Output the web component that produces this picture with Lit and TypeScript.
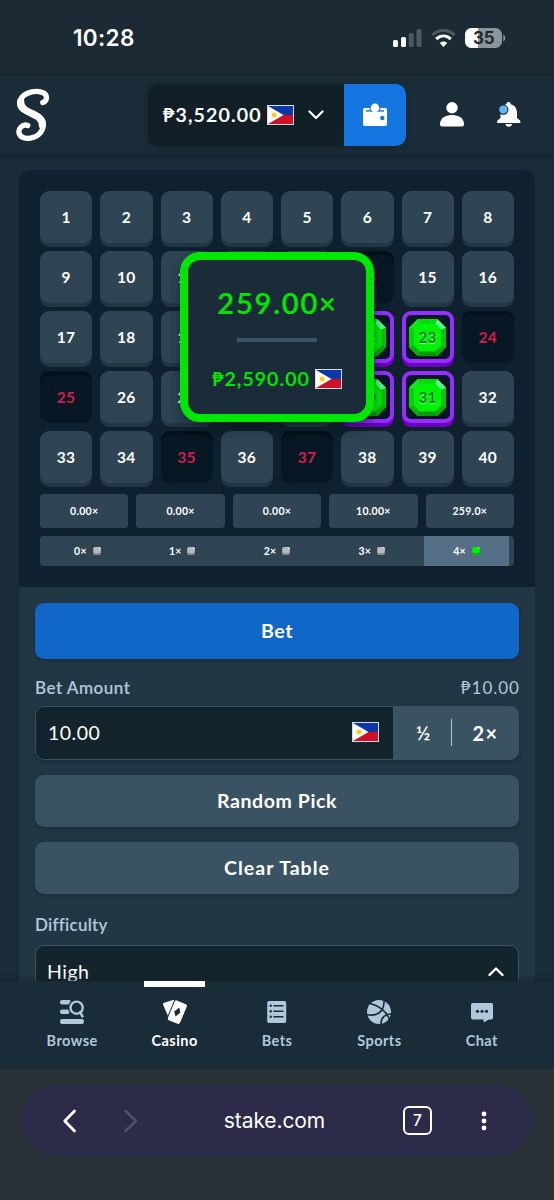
import { LitElement, html, svg, css } from "lit";
import { customElement, property } from "lit/decorators.js";
import { classMap } from "lit/directives/class-map.js";

const PICKED = new Set([22, 23, 30, 31]);
const MISSED = new Set([14, 24, 25, 28, 35, 37]);
const PAYOUTS = ["0.00×", "0.00×", "0.00×", "10.00×", "259.0×"];

@customElement("ph-flag")
export class PhFlag extends LitElement {
  static styles = css`
    :host { display: block; width: 27px; height: 20px; flex: none; }
    svg { display: block; }
  `;
  render() {
    return html`<svg width="27" height="20" viewBox="0 0 27 20">
      <rect width="27" height="20" fill="#d3dce8" />
      <rect x="1" y="1" width="25" height="9" fill="#0a38a8" />
      <rect x="1" y="10" width="25" height="9" fill="#ce1126" />
      <path d="M1 1L16.5 10L1 19Z" fill="#fff" />
      <circle cx="7" cy="10" r="2.3" fill="#fcc916" />
      <path d="M7 6.6V13.4M3.6 10H10.4M4.6 7.6L9.4 12.4M9.4 7.6L4.6 12.4" stroke="#fcd116" stroke-width=".6" />
      <circle cx="2.4" cy="3.3" r=".5" fill="#fcd116" /><circle cx="2.4" cy="16.7" r=".5" fill="#fcd116" />
    </svg>`;
  }
}

@customElement("keno-tile")
export class KenoTile extends LitElement {
  @property({ type: Number }) value = 0;

  static styles = css`
    :host { display: block; height: 52px; }
    .tile {
      box-sizing: border-box; height: 52px; border-radius: 9px; background: #2f4553;
      box-shadow: 0 4px 0 #213743; display: grid; place-items: center; color: #fff;
      font: 700 15.5px/20px "Lato", sans-serif; letter-spacing: .5px;
    }
    .missed { background: #071824; color: #d41e4a; box-shadow: inset 0 4px 0 #04111a; }
    .picked { background: #071824; border: 4px solid #962eff; box-shadow: 0 4px 0 #6c00c4; color: #0b7d12; }
    .gem, .num { grid-area: 1 / 1; }
    .num { margin-top: -1px; }
    .gem { display: block; }
    .picked .num { text-shadow: 0 1px 1px #8dffa0; z-index: 1; font-size: 15px; margin-top: 0; }
  `;
  render() {
    const picked = PICKED.has(this.value);
    return html`<div class=${classMap({ tile: true, picked, missed: MISSED.has(this.value) })}>
      ${picked
        ? html`<svg class="gem" width="37" height="37" viewBox="0 0 38 38">
            <path d="M9 0H29L38 9V29L29 38H9L0 29V9Z" fill="#05c808" />
            <path d="M9 0H29L27 5H11Z" fill="#04de08" />
            <path d="M0 9L9 0L11 5L5 11Z" fill="#12e51c" />
            <path d="M0 9L5 11V27L0 29Z" fill="#06cf0b" />
            <path d="M0 29L5 27L11 33L9 38Z" fill="#06b10b" />
            <path d="M9 38L11 33H27L29 38Z" fill="#05980a" />
            <path d="M29 38L27 33L33 27L38 29Z" fill="#04ad09" />
            <path d="M38 29L33 27V11L38 9Z" fill="#05c40a" />
            <path d="M29 0L38 9L33 11L27 5Z" fill="#55fb8c" />
            <path d="M11 5H27L33 11V27L27 33H11L5 27V11Z" fill="#00f205" />
          </svg>`
        : null}
      <span class="num">${this.value}</span>
    </div>`;
  }
}

const miniGem = (on: boolean) => svg`<svg width="8" height="8" viewBox="0 0 8 8">
  <rect width="8" height="8" rx="2" fill=${on ? "#05b80a" : "#8b8b8b"} />
  <rect x=".5" width="7" height="6" rx="1.6" fill=${on ? "#00ee08" : "#b9b9b9"} />
  <path d="M5.5 0H6.5L8 1.5V2.5Z" fill=${on ? "#7bffa5" : "#fff"} />
</svg>`;

const ICONS: Record<string, unknown> = {
  Browse: svg`<svg width="24" height="24" viewBox="0 0 24 24" fill="currentColor">
    <rect y="0" width="11" height="4.6" rx="2" /><rect y="9.4" width="9.5" height="4.6" rx="2" />
    <rect y="19" width="24" height="5" rx="2.2" />
    <circle cx="16.6" cy="7.7" r="8.6" fill="#1a2c38" />
    <circle cx="16.6" cy="7.7" r="6.1" fill="none" stroke="currentColor" stroke-width="2.4" />
    <path d="M20.2 12.2L22.4 16.4" stroke="currentColor" stroke-width="2.6" stroke-linecap="round" fill="none" /></svg>`,
  Casino: svg`<svg width="24" height="24" viewBox="0 0 24 24" fill="currentColor">
    <path d="M1.2 2.8L10 .1C10.6 0 11 .1 11.2 .3L4.8 15.6L.1 4.8C-.2 3.9 .3 3.1 1.2 2.8Z" />
    <path d="M13.8.4L22.8 4.2Q24.4 5 23.8 6.6L17 22.8Q16.2 24.3 14.6 23.8L5.8 20.2Q4.3 19.4 4.9 17.9L11.7 1.6Q12.4 0 13.8.4Z" />
    <path d="M16.2 7.6L17.4 12.4L12.5 16.5L11.2 11.6Z" fill="#1a2c38" /></svg>`,
  Bets: svg`<svg width="24" height="24" viewBox="0 0 24 24">
    <rect x="2.2" y="1" width="19" height="22" rx="1.8" fill="currentColor" />
    <g stroke="#1a2c38" stroke-width="1.6"><path d="M8.4 5.7H18.5M8.4 11.2H18.5M8.4 16.7H18.5" /></g>
    <g fill="#1a2c38"><circle cx="5.7" cy="5.7" r="1.2" /><circle cx="5.7" cy="11.2" r="1.2" /><circle cx="5.7" cy="16.7" r="1.2" /></g></svg>`,
  Sports: svg`<svg width="24" height="24" viewBox="0 0 24 24">
    <circle cx="12" cy="12" r="12" fill="currentColor" />
    <g fill="none" stroke="#1a2c38" stroke-width="1.6">
      <path d="M3 3.5C11 5 19.5 11 22.5 19.5M-.5 14.5C8 16.5 18 13.5 17 -.5M14 25C13.5 18 18 13.5 25 14" /></g></svg>`,
  Chat: svg`<svg width="24" height="24" viewBox="0 0 24 24">
    <path d="M2.6 3H21.4Q23 3 23 4.6V17.8Q23 19.4 21.4 19.4H19L13.6 22.6V19.4H2.6Q1 19.4 1 17.8V4.6Q1 3 2.6 3Z" fill="currentColor" />
    <g fill="#1a2c38"><circle cx="7.5" cy="11.3" r="1.6" /><circle cx="12" cy="11.3" r="1.6" /><circle cx="16.5" cy="11.3" r="1.6" /></g></svg>`,
};

@customElement("app-root")
export class AppRoot extends LitElement {
  static styles = css`
    :host {
      display: flex; flex-direction: column; width: 554px; height: 1200px; overflow: hidden;
      background: #1a2c38; color: #fff; font-family: "Lato", "Noto Sans", sans-serif;
    }
    * { box-sizing: border-box; }
    svg { display: block; flex: none; }
    .status {
      flex: none; height: 76px; background: #1b2a35; display: flex; align-items: center;
      padding: 0 48px 0 73px; font: 600 22.5px/30px "Inter", sans-serif;
    }
    .time { flex: 1; letter-spacing: .35px; }
    .signals { display: flex; align-items: center; gap: 9px; }
    .topbar {
      flex: none; height: 77px; display: flex; align-items: center; padding: 0 31px 0 14px;
      box-shadow: 0 3px 6px #0f1c2580; position: relative;
    }
    .logo { width: 134px; }
    .balance { display: flex; width: 258px; height: 62px; border-radius: 10px; overflow: hidden; box-shadow: 0 2px 4px #0f1c2580; }
    .funds {
      width: 196px; background: #111f26; padding-left: 15px; display: flex; align-items: center;
      font-size: 19.5px; font-weight: 600; -webkit-text-stroke: .2px currentColor;
    }
    .funds span { width: 103.5px; letter-spacing: 1.15px; white-space: nowrap; }
    .funds .caret { margin-left: 14px; }
    .wallet { width: 62px; background: #1475e1; display: grid; place-items: center; }
    .user { margin-left: 34px; }
    .bell { margin-left: 32px; }
    .page { flex: 1; min-height: 0; overflow: hidden; padding: 17px 19px 0; background: #1a2c38; }
    .card { border-radius: 12px 12px 0 0; background: #213743; overflow: hidden; }
    .board { position: relative; height: 416.5px; background: #0f212e; padding: 21px 21px 0; }
    .tiles { display: grid; grid-template-columns: repeat(8, 1fr); gap: 8px; }
    .payouts { display: grid; grid-template-columns: repeat(5, 1fr); gap: 8px; margin-top: 11px; }
    .payouts div {
      height: 34px; border-radius: 4px; background: #2f4553; display: grid; place-items: center;
      font-size: 10.5px; font-weight: 700; letter-spacing: .3px;
    }
    .hits { display: flex; justify-content: space-around; height: 30px; margin-top: 8px; border-radius: 4px; background: #2f4553; overflow: hidden; }
    .hit { width: 85px; display: flex; align-items: center; justify-content: center; gap: 6px; font-size: 10.5px; font-weight: 700; letter-spacing: .2px; }
    .hit.on { background: #557086; }
    .win {
      position: absolute; left: 161px; top: 82px; width: 194px; height: 170px; border: 8px solid #00e701;
      border-radius: 20px; background: #1a2c38; color: #00e701; display: flex; flex-direction: column;
      align-items: center; padding-top: 26px; box-shadow: 0 6px 14px #04111a80; z-index: 2;
      font-weight: 600; -webkit-text-stroke: .2px currentColor;
    }
    .mult { font-size: 29px; line-height: 34px; letter-spacing: 1.8px; white-space: nowrap; padding-left: 1px; }
    .rule { width: 80px; height: 4px; background: #3d5564; margin-top: 18px; }
    .won { display: flex; align-items: center; gap: 5px; margin-top: 25px; font-size: 19.5px; line-height: 24px; letter-spacing: 1.05px; }
    .controls { padding: 16px 16px 0; }
    .btn {
      height: 51.5px; border-radius: 9px; background: #3a5363; display: grid; place-items: center;
      font-size: 19.5px; font-weight: 700; letter-spacing: .6px; box-shadow: 0 2px 3px #14222c66;
    }
    .clear { letter-spacing: 1px; }
    .bet { height: 56px; background: #1067c7; }
    .label { display: flex; justify-content: space-between; color: #b1c8da; font-size: 17px; line-height: 22px; font-weight: 600; letter-spacing: .5px; -webkit-text-stroke: .1px currentColor; }
    .label.diff { letter-spacing: .25px; }
    .label .fiat { font-weight: 400; letter-spacing: 1px; margin-right: -1px; -webkit-text-stroke: 0; }
    .bet + .label { margin-top: 18px; }
    .amount { display: flex; height: 54px; margin-top: 7px; border-radius: 9px; overflow: hidden; box-shadow: 0 2px 3px #14222c66; }
    .input {
      width: 358px; border: 1px solid #3a5363; border-right: 0; border-radius: 9px 0 0 9px; background: #14242c;
      display: flex; align-items: center; justify-content: space-between; padding: 0 14px 1px 12px; font-size: 19.5px; letter-spacing: .5px;
    }
    .steps { flex: 1; background: #3a5363; display: flex; align-items: center; font-size: 19.5px; font-weight: 600; }
    .steps span { width: 58px; padding-left: 2px; text-align: center; }
    .steps .double { width: 67px; padding: 0; font-weight: 700; letter-spacing: 1.5px; font-size: 20px; }
    .steps i { width: 1px; height: 27px; background: #b1c8da; }
    .amount + .btn { margin-top: 15.5px; margin-bottom: 15.5px; }
    .btn + .label.diff { margin-top: 20.5px; }
    .select {
      height: 54px; margin-top: 9px; border: 1px solid #3a5363; border-radius: 9px; background: #14242c;
      display: flex; align-items: center; justify-content: space-between; padding: 0 14px 1px 11px; font-size: 19.5px; letter-spacing: .5px;
    }
    .nav {
      flex: none; height: 88px; display: flex; padding: 0 21px; background: #1a2c38; position: relative;
      box-shadow: 0 -2px 5px #0f1c2566; color: #b1c8da;
    }
    .nav div {
      flex: 1; display: flex; flex-direction: column; align-items: center;
      font-size: 14.5px; line-height: 20px; font-weight: 700; letter-spacing: .45px;
    }
    .nav div::before { content: ""; width: 61px; height: 5.5px; margin-bottom: 13.5px; flex: none; }
    .nav div svg { margin-bottom: 7px; }
    .nav .on { color: #fff; }
    .nav .on::before { background: #fff; }
    .browser { flex: none; height: 131px; background: #2b3237; padding: 16px 21px 0; }
    .pill {
      height: 71px; border-radius: 36px; background: #2c2b4a; display: flex; align-items: center;
      padding: 0 46px 0 41px; font: 400 21px/28px "Inter", sans-serif;
    }
    .forward { margin-left: 46px; }
    .url { flex: 1; text-align: center; padding-left: 8px; letter-spacing: -.1px; }
    .tabs {
      width: 29px; height: 29px; border: 2.5px solid #fff; border-radius: 6px; display: grid; place-items: center;
      font-size: 15.5px; line-height: 20px; font-weight: 500; margin-right: 49px;
    }
  `;

  render() {
    return html`
      <div class="status">
        <span class="time">10:28</span>
        <div class="signals">
          <svg width="29" height="18" viewBox="0 0 29 18">
            <rect y="11" width="5" height="7" rx="1.5" fill="#fff" /><rect x="8" y="8" width="5" height="10" rx="1.5" fill="#fff" />
            <rect x="15.7" y="4" width="5" height="14" rx="1.5" fill="#4a5862" /><rect x="23.5" width="5" height="18" rx="1.5" fill="#4a5862" />
          </svg>
          <svg width="25" height="18" viewBox="0 0 25 18" fill="none">
            <path d="M1.5 6C8-.2 17-.2 23.5 6" stroke="#4a5862" stroke-width="3.2" />
            <path d="M5.2 10C9.6 6 15.4 6 19.8 10" stroke="#fff" stroke-width="3.2" />
            <path d="M12.5 18L8.8 14C11 12 14 12 16.2 14Z" fill="#fff" />
          </svg>
          <svg width="41" height="20" viewBox="0 0 41 20">
            <defs><clipPath id="batt"><rect width="37" height="20" rx="6.5" /></clipPath></defs>
            <g clip-path="url(#batt)"><rect width="37" height="20" fill="#8d959b" /><rect width="13" height="20" fill="#fff" /></g>
            <path d="M38.3 6.5Q40.3 7.6 40.3 10T38.3 13.5Z" fill="#8d959b" />
            <text x="18.8" y="16" text-anchor="middle" font-family="Inter" font-size="17" font-weight="700" fill="#1b2a35">35</text>
          </svg>
        </div>
      </div>

      <div class="topbar">
        <div class="logo">
          <svg width="38" height="54" viewBox="0 0 38 54" fill="none" stroke="#fff" stroke-linecap="round" stroke-linejoin="round">
            <path d="M28.8 14.6C33.5 13 34 6.5 28.5 4.4C19 1.3 5.7 6 5.7 16C5.7 26.5 29.3 24 29.3 36C29.3 45 22 50.3 13.5 50.3C4.7 50.3 3 43 7 39C9 37 11.5 36.6 13.8 37.4" stroke-width="5.3" />
            <path d="M6.7 13.5C6 26.5 28.7 24 28.3 37" stroke-width="7.2" />
          </svg>
        </div>
        <div class="balance">
          <div class="funds">
            <span>₱3,520.00</span><ph-flag></ph-flag>
            <svg class="caret" width="16" height="10" viewBox="0 0 16 10" fill="none" stroke="#fff" stroke-width="2.2" stroke-linecap="round" stroke-linejoin="round"><path d="M1.5 1.5L8 8L14.5 1.5" /></svg>
          </div>
          <div class="wallet">
            <svg width="24" height="24" viewBox="0 0 24 24">
              <path d="M1.8 5H22.2Q24 5 24 6.8V21.2Q24 23 22.2 23H1.8Q0 23 0 21.2V6.8Q0 5 1.8 5Z" fill="#fff" />
              <path d="M3 8H21" stroke="#1475e1" stroke-width="1.6" /><circle cx="12" cy="5" r="5.6" fill="#1475e1" /><circle cx="12" cy="5" r="4.4" fill="#fff" />
              <rect x="5" y="8.8" width="14" height="3" fill="#fff" /><circle cx="19.3" cy="15" r="2.2" fill="#1475e1" />
            </svg>
          </div>
        </div>
        <svg class="user" width="24" height="25" viewBox="0 0 24 25" fill="#fff">
          <circle cx="12" cy="5.8" r="5.7" /><path d="M0 22.5C0 16.5 4.5 13 12 13S24 16.5 24 22.5Q24 24.5 22 24.5H2Q0 24.5 0 22.5Z" />
        </svg>
        <svg class="bell" width="26" height="26" viewBox="0 0 26 26">
          <path d="M12.5 0A2.2 2.2 0 0 1 14.7 2.2C19 3.2 20.8 6.5 21 10.5V16L24 18.5Q25.2 20.8 23.5 21H2Q.3 20.8 1.5 18.5L4.5 16V10.5C4.7 6.5 6.5 3.2 10.3 2.2A2.2 2.2 0 0 1 12.5 0Z" fill="#fff" />
          <path d="M9.5 22H16A3.3 3.3 0 0 1 9.5 22Z" fill="#fff" />
          <circle cx="7.3" cy="7.6" r="5.2" fill="#1a2c38" /><circle cx="7.3" cy="7.6" r="4.1" fill="#6ab0f5" />
        </svg>
      </div>

      <div class="page">
        <div class="card">
          <div class="board">
            <div class="tiles">${Array.from({ length: 40 }, (_, i) => html`<keno-tile .value=${i + 1}></keno-tile>`)}</div>
            <div class="payouts">${PAYOUTS.map((p) => html`<div>${p}</div>`)}</div>
            <div class="hits">
              ${[0, 1, 2, 3, 4].map((n) => html`<div class=${classMap({ hit: true, on: n === 4 })}><span>${n}×</span>${miniGem(n === 4)}</div>`)}
            </div>
            <div class="win">
              <div class="mult">259.00×</div>
              <div class="rule"></div>
              <div class="won"><span>₱2,590.00</span><ph-flag></ph-flag></div>
            </div>
          </div>
          <div class="controls">
            <div class="btn bet">Bet</div>
            <div class="label"><span>Bet Amount</span><span class="fiat">₱10.00</span></div>
            <div class="amount">
              <div class="input"><span>10.00</span><ph-flag></ph-flag></div>
              <div class="steps"><span>½</span><i></i><span class="double">2×</span></div>
            </div>
            <div class="btn">Random Pick</div>
            <div class="btn clear">Clear Table</div>
            <div class="label diff"><span>Difficulty</span></div>
            <div class="select">
              <span>High</span>
              <svg width="16" height="10" viewBox="0 0 16 10" fill="none" stroke="#fff" stroke-width="2.4" stroke-linecap="round" stroke-linejoin="round"><path d="M1.5 8L8 1.5L14.5 8" /></svg>
            </div>
          </div>
        </div>
      </div>

      <div class="nav">
        ${Object.keys(ICONS).map((name) => html`<div class=${classMap({ on: name === "Casino" })}>${ICONS[name]}<span>${name}</span></div>`)}
      </div>

      <div class="browser">
        <div class="pill">
          <svg width="15" height="24" viewBox="0 0 15 24" fill="none" stroke="#fff" stroke-width="2.8" stroke-linecap="round" stroke-linejoin="round"><path d="M12.5 2L2.8 12L12.5 22" /></svg>
          <svg class="forward" width="15" height="24" viewBox="0 0 15 24" fill="none" stroke="#4f4f6c" stroke-width="2.6" stroke-linecap="round" stroke-linejoin="round"><path d="M2.5 2L13 12L2.5 22" /></svg>
          <span class="url">stake.com</span>
          <span class="tabs">7</span>
          <svg width="6" height="20" viewBox="0 0 6 20" fill="#fff"><circle cx="3" cy="3" r="2.4" /><circle cx="3" cy="10" r="2.4" /><circle cx="3" cy="17" r="2.4" /></svg>
        </div>
      </div>
    `;
  }
}
